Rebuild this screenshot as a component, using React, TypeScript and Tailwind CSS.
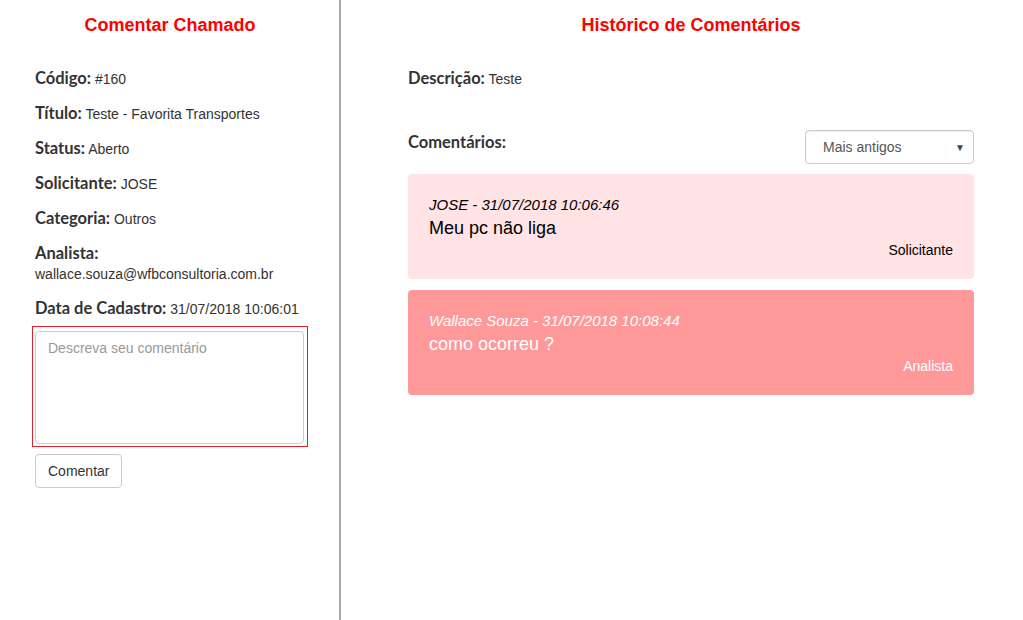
const info = [
  { label: "Código:", value: "#160" },
  { label: "Título:", value: "Teste - Favorita Transportes" },
  { label: "Status:", value: "Aberto" },
  { label: "Solicitante:", value: "JOSE" },
  { label: "Categoria:", value: "Outros" },
];

const comments = [
  {
    author: "JOSE - 31/07/2018 10:06:46",
    text: "Meu pc não liga",
    role: "Solicitante",
    box: "bg-[#ffe3e5] text-black",
  },
  {
    author: "Wallace Souza - 31/07/2018 10:08:44",
    text: "como ocorreu ?",
    role: "Analista",
    box: "bg-[#ff9999] text-white",
  },
];

const label = "font-['Lato',sans-serif] font-bold text-[16.5px] leading-[20px] text-[#333]";

export default function App() {
  return (
    <div className="flex h-[620px] w-[1023px] bg-white font-['Liberation_Sans',Arial,sans-serif] text-[14px] text-[#333]">
      {/* coluna esquerda */}
      <div className="w-[341px] shrink-0 border-r-2 border-[#aaa] pl-[35px]">
        <h2 className="mt-[15px] w-[270px] text-center text-[18px] font-bold leading-[20px] text-[#ff0000]">
          Comentar Chamado
        </h2>

        <div className="mt-[33px] flex flex-col gap-[15px]">
          {info.map((row) => (
            <div key={row.label} className="h-[20px] leading-[20px]">
              <span className={label}>{row.label}</span> {row.value}
            </div>
          ))}
          <div className="leading-[20px]">
            <div className={label}>Analista:</div>
            <div className="mt-px">wallace.souza@wfbconsultoria.com.br</div>
          </div>
        </div>

        <div className="mt-[14px] h-[20px] leading-[20px]">
          <span className={label}>Data de Cadastro:</span> 31/07/2018 10:06:01
        </div>

        <div className="-ml-[3px] mt-[8px] w-[276px] border border-[#e0202a] pb-[2px] pl-[2px] pr-[3px] pt-[4px]">
          <textarea
            placeholder="Descreva seu comentário"
            className="block h-[113px] w-full resize-none rounded-[4px] border border-[#ccc] px-[12px] py-[6px] text-[14px] leading-[20px] text-[#555] placeholder:text-[#999] outline-none"
          />
        </div>

        <button className="mt-[7px] h-[34px] rounded-[4px] border border-[#ccc] bg-white px-[12px] text-[14px] text-[#333]">
          Comentar
        </button>
      </div>

      {/* coluna direita */}
      <div className="flex-1 pl-[67px]">
        <div className="w-[566px]">
          <h2 className="mt-[15px] text-center text-[18px] font-bold leading-[20px] text-[#ff0000]">
            Histórico de Comentários
          </h2>

          <div className="mt-[33px] h-[20px] leading-[20px]">
            <span className={label}>Descrição:</span> Teste
          </div>

          <div className="mt-[42px] flex items-start justify-between">
            <div className={`${label} mt-[2px]`}>Comentários:</div>
            <div className="flex h-[34px] w-[169px] items-center justify-between rounded-[4px] border border-[#ccc] pl-[17px] pr-[8px] text-[14px] text-[#555] shadow-[inset_0_1px_1px_rgba(0,0,0,0.075)]">
              <span>Mais antigos</span>
              <span className="text-[10px] text-[#444]">▼</span>
            </div>
          </div>

          <div className="mt-[10px] flex flex-col gap-[11px]">
            {comments.map((c) => (
              <div key={c.author} className={`h-[105px] rounded-[4px] px-[21px] pt-[21px] ${c.box}`}>
                <div className="text-[15px] italic leading-[20px]">{c.author}</div>
                <div className="mt-px text-[18px] leading-[24px]">{c.text}</div>
                <div className="text-right text-[14px] leading-[20px]">{c.role}</div>
              </div>
            ))}
          </div>
        </div>
      </div>
    </div>
  );
}
